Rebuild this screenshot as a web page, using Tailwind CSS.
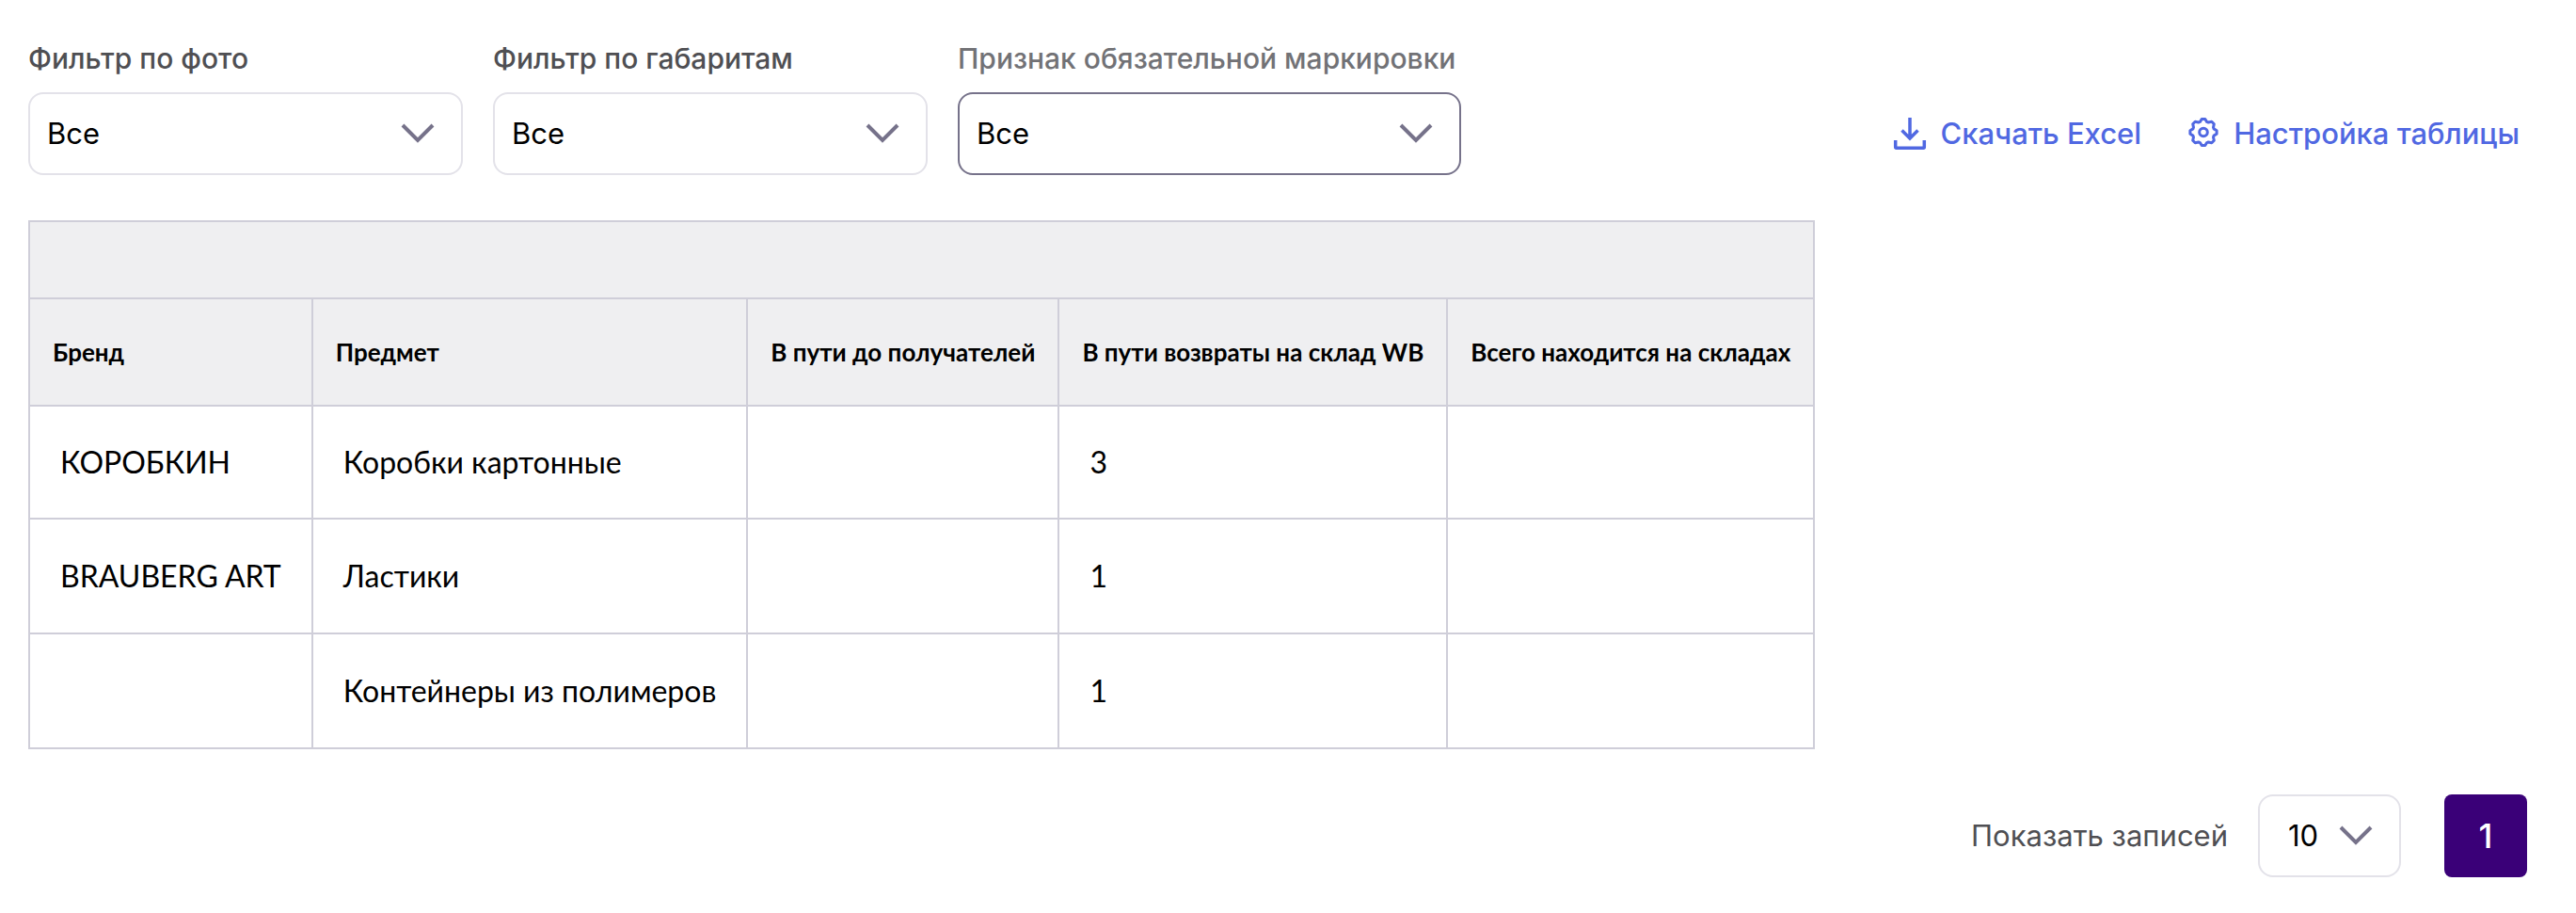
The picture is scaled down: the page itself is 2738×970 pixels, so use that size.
<!DOCTYPE html>
<html lang="ru">
<head>
    <meta charset="UTF-8">
    <meta name="viewport" content="width=device-width, initial-scale=1.0">
    <title>Остатки на складах</title>
    <script src="https://cdn.jsdelivr.net/npm/@tailwindcss/browser@4"></script>
</head>
<body class="bg-white text-black font-['Inter',sans-serif]">
    <div class="min-h-screen pt-10 pr-[52px] pb-9 pl-[30px]">
        <!-- Filters -->
        <div class="flex items-end justify-between">
            <div class="flex items-end gap-8">
                <div class="flex flex-col gap-[14px]">
                    <label for="filter_photo" class="text-[30px] leading-11 font-medium text-[#4f4f53]">Фильтр по фото</label>
                    <div class="relative">
                        <select id="filter_photo" class="appearance-none w-[462px] h-[88px] px-[18px] text-[31px] bg-white border-2 border-[#e3e2e9] rounded-2xl">
                            <option>Все</option>
                        </select>
                        <svg class="absolute right-7 top-8 pointer-events-none" width="40" height="24" viewBox="0 0 40 24" fill="none" stroke="#76728a" stroke-width="4"><path d="M4 3L20 19L36 3"/></svg>
                    </div>
                </div>
                <div class="flex flex-col gap-[14px]">
                    <label for="filter_size" class="text-[30px] leading-11 font-medium text-[#4f4f53]">Фильтр по габаритам</label>
                    <div class="relative">
                        <select id="filter_size" class="appearance-none w-[462px] h-[88px] px-[18px] text-[31px] bg-white border-2 border-[#e3e2e9] rounded-2xl">
                            <option>Все</option>
                        </select>
                        <svg class="absolute right-7 top-8 pointer-events-none" width="40" height="24" viewBox="0 0 40 24" fill="none" stroke="#76728a" stroke-width="4"><path d="M4 3L20 19L36 3"/></svg>
                    </div>
                </div>
                <div class="flex flex-col gap-[14px]">
                    <label for="filter_mark" class="text-[30px] leading-11 font-medium text-[#727276]">Признак обязательной маркировки</label>
                    <div class="relative">
                        <select id="filter_mark" class="appearance-none w-[535px] h-[88px] px-[18px] text-[31px] bg-white border-2 border-[#76728a] rounded-2xl">
                            <option>Все</option>
                        </select>
                        <svg class="absolute right-7 top-8 pointer-events-none" width="40" height="24" viewBox="0 0 40 24" fill="none" stroke="#76728a" stroke-width="4"><path d="M4 3L20 19L36 3"/></svg>
                    </div>
                </div>
            </div>
            <!-- Actions -->
            <div class="flex items-center gap-12 h-[88px] pr-2 text-[31px] font-medium text-[#5068e2]">
                <button type="button" class="flex items-center gap-[14px]">
                    <svg width="36" height="40" viewBox="0 0 36 40" fill="none" stroke="currentColor" stroke-width="3.5" stroke-linejoin="round"><path d="M18 3V24M9.5 16.5L18 25L26.5 16.5" stroke-linejoin="miter"/><path d="M2.7 27V34.3Q2.7 35.3 3.7 35.3H32.3Q33.3 35.3 33.3 34.3V27"/></svg>
                    Скачать Excel
                </button>
                <button type="button" class="flex items-center gap-[14px]">
                    <svg width="36" height="40" viewBox="0 0 36 40" fill="none" stroke="currentColor" stroke-width="3" stroke-linejoin="round">
                        <circle cx="18" cy="18.5" r="4.3"/>
                        <path d="M16.2 4.4H19.8L21.6 7.4L23.2 8L26.8 7.2L29.3 9.7L28.5 13.3L29.1 14.9L32.1 16.7V20.3L29.1 22.1L28.5 23.7L29.3 27.3L26.8 29.8L23.2 29L21.6 29.6L19.8 32.6H16.2L14.4 29.6L12.8 29L9.2 29.8L6.7 27.3L7.5 23.7L6.9 22.1L3.9 20.3V16.7L6.9 14.9L7.5 13.3L6.7 9.7L9.2 7.2L12.8 8L14.4 7.4Z"/>
                    </svg>
                    Настройка таблицы
                </button>
            </div>
        </div>

        <!-- Table -->
        <table class="mt-12 border-collapse border-2 border-[#cfced9] text-left font-['Lato',sans-serif]">
            <thead class="bg-[#efeff1] text-[26px] font-bold">
                <tr class="h-[82px]">
                    <td colspan="5" class="border-2 border-[#cfced9]"></td>
                </tr>
                <tr class="h-[114px]">
                    <th class="border-2 border-[#cfced9] px-6 whitespace-nowrap">Бренд</th>
                    <th class="border-2 border-[#cfced9] px-6 whitespace-nowrap">Предмет</th>
                    <th class="border-2 border-[#cfced9] px-6 whitespace-nowrap">В пути до получателей</th>
                    <th class="border-2 border-[#cfced9] px-6 whitespace-nowrap">В пути возвраты на склад WB</th>
                    <th class="border-2 border-[#cfced9] px-6 whitespace-nowrap">Всего находится на складах</th>
                </tr>
            </thead>
            <tbody class="text-[32px]">
                <tr class="h-[120px]">
                    <td class="border-2 border-[#cfced9] px-8 whitespace-nowrap">КОРОБКИН</td>
                    <td class="border-2 border-[#cfced9] px-8 whitespace-nowrap">Коробки картонные</td>
                    <td class="border-2 border-[#cfced9] px-8"></td>
                    <td class="border-2 border-[#cfced9] px-8">3</td>
                    <td class="border-2 border-[#cfced9] px-8"></td>
                </tr>
                <tr class="h-[122px]">
                    <td class="border-2 border-[#cfced9] px-8 whitespace-nowrap">BRAUBERG ART</td>
                    <td class="border-2 border-[#cfced9] px-8 whitespace-nowrap">Ластики</td>
                    <td class="border-2 border-[#cfced9] px-8"></td>
                    <td class="border-2 border-[#cfced9] px-8">1</td>
                    <td class="border-2 border-[#cfced9] px-8"></td>
                </tr>
                <tr class="h-[122px]">
                    <td class="border-2 border-[#cfced9] px-8"></td>
                    <td class="border-2 border-[#cfced9] px-8 whitespace-nowrap">Контейнеры из полимеров</td>
                    <td class="border-2 border-[#cfced9] px-8"></td>
                    <td class="border-2 border-[#cfced9] px-8">1</td>
                    <td class="border-2 border-[#cfced9] px-8"></td>
                </tr>
            </tbody>
        </table>

        <!-- Pagination -->
        <div class="mt-12 flex items-center justify-end">
            <label for="page_size" class="mr-8 text-[31px] text-[#4f4f53]">Показать записей</label>
            <div class="relative mr-[46px]">
                <select id="page_size" class="appearance-none w-[152px] h-[88px] pl-[30px] text-[31px] bg-white border-2 border-[#e3e2e9] rounded-2xl">
                    <option>10</option>
                </select>
                <svg class="absolute right-7 top-8 pointer-events-none" width="40" height="24" viewBox="0 0 40 24" fill="none" stroke="#76728a" stroke-width="4"><path d="M4 3L20 19L36 3"/></svg>
            </div>
            <button type="button" class="size-[88px] rounded-lg bg-[#3a0078] text-[36px] font-medium text-white">1</button>
        </div>
    </div>
</body>
</html>
